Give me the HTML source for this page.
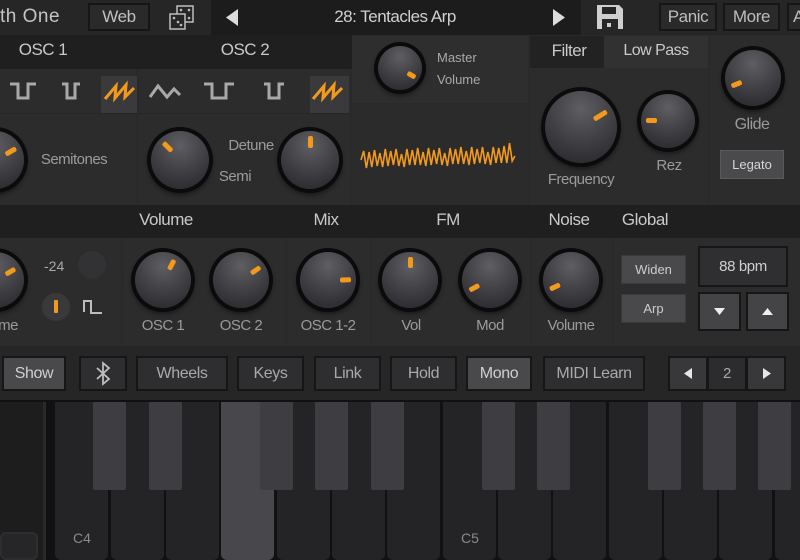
<!DOCTYPE html>
<html style="width:800px;height:560px;overflow:hidden"><head><meta charset="utf-8"><style>
*{margin:0;padding:0;box-sizing:border-box}
body{width:800px;height:560px;overflow:hidden;background:#2a2a2b;font-family:"Liberation Sans",sans-serif;position:relative}
.a{position:absolute}
.p{position:absolute;background:#2c2c2d}
.h{position:absolute;background:#1f1f20}
.t{position:absolute;color:#c9c9c9;font-size:17px;transform:translateX(-50%);white-space:nowrap;letter-spacing:-0.5px}
.l{position:absolute;color:#9b9b9b;font-size:15px;transform:translateX(-50%);white-space:nowrap;letter-spacing:-0.5px}
.k{position:absolute;border-radius:50%;background:radial-gradient(circle at 50% 25%,#5e5e63,#46464a 40%,#2f2f33 80%);box-shadow:0 0 0 4px #0b0b0b,0 3px 5px 3px rgba(0,0,0,.45)}
.k b{position:absolute;inset:0}
.k b:after{content:"";position:absolute;left:calc(50% - 2.5px);top:9%;width:5px;height:20%;background:#f39a1c;border-radius:2px}
.btn{position:absolute;background:#2e2e30;border:2px solid #161617;color:#a9a9a9;font-size:16px;text-align:center;letter-spacing:-0.4px}
.btn.on{background:#49494c;color:#cfcfcf}
.wk{position:absolute;top:402px;height:158px;background:#242426;border-radius:0 0 6px 6px;width:53px}
.bk{position:absolute;top:402px;height:88px;width:33px;background:#3e3e42;border-radius:0 0 2px 2px}
</style></head><body>
<div class="a" style="left:0;top:0;width:800px;height:35px;background:#262627"></div>
<div class="a" style="left:0;top:6px;color:#c4c4c4;font-size:19px;letter-spacing:0.5px">th One</div>
<div class="btn" style="left:88px;top:3px;width:62px;height:28px;line-height:24px;font-size:17px;background:#2a2a2b;color:#c0c0c0">Web</div>
<svg class="a" style="left:166px;top:3px" width="32" height="30" viewBox="0 0 32 30"><g fill="none" stroke="#bdbdbd" stroke-width="1.5"><rect x="11" y="3" width="16" height="16"/><rect x="4" y="11" width="15" height="15" fill="#262627"/></g><g fill="#bdbdbd"><circle cx="15" cy="7" r="1.3"/><circle cx="23" cy="7" r="1.3"/><circle cx="23" cy="15" r="1.3"/><circle cx="8" cy="15" r="1.3"/><circle cx="12" cy="19" r="1.3"/><circle cx="15" cy="22" r="1.3"/></g></svg>
<div class="a" style="left:211px;top:0;width:370px;height:35px;background:#1c1c1d"></div>
<svg class="a" style="left:224px;top:8px" width="16" height="19"><path d="M14 1 L2 9.5 L14 18Z" fill="#dcdcdc"/></svg>
<div class="t" style="left:395px;top:7px;font-size:17px;color:#d0d0d0">28: Tentacles Arp</div>
<svg class="a" style="left:551px;top:8px" width="16" height="19"><path d="M2 1 L14 9.5 L2 18Z" fill="#dcdcdc"/></svg>
<svg class="a" style="left:596px;top:4px" width="28" height="26" viewBox="0 0 28 26"><path d="M1 1 H23 L27 5 V25 H1Z" fill="#cfcfcf"/><rect x="6" y="3" width="14" height="7" fill="#262627"/><rect x="6" y="15" width="16" height="10" fill="#262627"/><rect x="11" y="19" width="4" height="4" fill="#cfcfcf"/></svg>
<div class="btn" style="left:659px;top:3px;width:58px;height:28px;line-height:24px;font-size:17px;background:#2a2a2b;color:#bdbdbd">Panic</div>
<div class="btn" style="left:723px;top:3px;width:57px;height:28px;line-height:24px;font-size:17px;background:#2a2a2b;color:#bdbdbd">More</div>
<div class="btn" style="left:787px;top:3px;width:30px;height:28px;line-height:24px;font-size:17px;background:#2a2a2b;color:#bdbdbd;text-align:left;padding-left:4px">A</div>

<div class="h" style="left:0;top:35px;width:352px;height:34px"></div>
<div class="t" style="left:43px;top:40px">OSC 1</div>
<div class="t" style="left:245px;top:40px">OSC 2</div>
<div class="p" style="left:0;top:69px;width:136px;height:136px"></div>
<div class="p" style="left:139px;top:69px;width:211px;height:136px"></div>
<div class="a" style="left:0;top:113px;width:350px;height:1px;background:#262627"></div>
<div class="a" style="left:101px;top:76px;width:36px;height:37px;background:#3a3a3c"></div>
<div class="a" style="left:310px;top:76px;width:39px;height:37px;background:#3a3a3c"></div>
<svg class="a" style="left:0;top:69px" width="350" height="44" viewBox="0 69 350 44"><g fill="none" stroke="#a9a9a9" stroke-width="3">
<path d="M10 84 H18 V98 H28 V84 H36"/>
<path d="M62 84 H67 V98 H75 V84 H80"/>
<path d="M150 97 L158 86 L167 97 L174 89 L180 95"/>
<path d="M204 84 H212 V98 H226 V84 H234"/>
<path d="M264 84 H269 V98 H279 V84 H284"/>
</g><g fill="none" stroke="#f39a1c" stroke-width="3">
<path d="M105 99 L116 86 L115 98 L126 85 L125 97 L134 88"/>
<path d="M313 99 L324 86 L323 98 L334 85 L333 97 L342 88"/>
</g></svg>
<div class="k" style="left:-34px;top:131px;width:58px;height:58px"><b style="transform:rotate(60deg)"></b></div>
<div class="l" style="left:74px;top:151px">Semitones</div>
<div class="k" style="left:151px;top:131px;width:58px;height:58px"><b style="transform:rotate(-45deg)"></b></div>
<div class="l" style="left:251px;top:137px">Detune</div>
<div class="l" style="left:235px;top:168px">Semi</div>
<div class="k" style="left:281px;top:131px;width:58px;height:58px"><b></b></div>

<div class="p" style="left:352px;top:36px;width:176px;height:67px;background:#2e2e2f"></div>
<div class="p" style="left:352px;top:104px;width:176px;height:101px;background:#2b2b2c"></div>
<div class="k" style="left:378px;top:46px;width:44px;height:44px"><b style="transform:rotate(120deg)"></b></div>
<div class="a" style="left:437px;top:47px;color:#a9a9a9;font-size:13px;line-height:22px">Master<br>Volume</div>
<svg class="a" style="left:352px;top:104px" width="176" height="100"><path fill="none" stroke="#f39a1c" stroke-width="1.6" d="M9 56 l2.7 -9 l2.7 17 l2.7 -16 l2.7 15 l2.7 -17 l2.7 16 l2.7 -13 l2.7 14 l2.7 -18 l2.7 17 l2.7 -15 l2.7 14 l2.7 -16 l2.7 17 l2.7 -12 l2.7 13 l2.7 -18 l2.7 16 l2.7 -15 l2.7 15 l2.7 -17 l2.7 17 l2.7 -13 l2.7 14 l2.7 -18 l2.7 17 l2.7 -15 l2.7 14 l2.7 -16 l2.7 17 l2.7 -12 l2.7 13 l2.7 -18 l2.7 16 l2.7 -15 l2.7 15 l2.7 -17 l2.7 17 l2.7 -13 l2.7 14 l2.7 -18 l2.7 17 l2.7 -15 l2.7 14 l2.7 -16 l2.7 17 l2.7 -12 l2.7 13 l2.7 -18 l2.7 16 l2.7 -15 l2.7 15 l2.7 -17 l2.7 17 l2.7 -20 l2.7 18 l2.7 -5"/></svg>

<div class="h" style="left:530px;top:36px;width:74px;height:32px;background:#222223"></div>
<div class="a" style="left:604px;top:36px;width:104px;height:32px;background:#313132"></div>
<div class="t" style="left:569px;top:41px">Filter</div>
<div class="t" style="left:656px;top:42px;font-size:16px">Low Pass</div>
<div class="p" style="left:530px;top:68px;width:178px;height:137px"></div>
<div class="k" style="left:545px;top:91px;width:72px;height:72px"><b style="transform:rotate(58deg)"></b></div>
<div class="l" style="left:581px;top:171px">Frequency</div>
<div class="k" style="left:641px;top:94px;width:54px;height:54px"><b style="transform:rotate(-90deg)"></b></div>
<div class="l" style="left:669px;top:157px">Rez</div>
<div class="p" style="left:710px;top:36px;width:90px;height:169px"></div>
<div class="k" style="left:725px;top:50px;width:56px;height:56px"><b style="transform:rotate(-112deg)"></b></div>
<div class="l" style="left:752px;top:116px;font-size:16px">Glide</div>
<div class="a" style="left:720px;top:150px;width:64px;height:29px;background:#4a4a4d;border:1px solid #5a5a5d;color:#d6d6d6;font-size:13px;text-align:center;line-height:27px">Legato</div>

<div class="h" style="left:0;top:205px;width:800px;height:33px"></div>
<div class="t" style="left:166px;top:210px">Volume</div>
<div class="t" style="left:326px;top:210px">Mix</div>
<div class="t" style="left:448px;top:210px">FM</div>
<div class="t" style="left:569px;top:210px">Noise</div>
<div class="t" style="left:645px;top:210px">Global</div>
<div class="p" style="left:0;top:238px;width:121px;height:108px"></div>
<div class="p" style="left:123px;top:238px;width:162px;height:108px"></div>
<div class="p" style="left:287px;top:238px;width:83px;height:108px"></div>
<div class="p" style="left:372px;top:238px;width:158px;height:108px"></div>
<div class="p" style="left:532px;top:238px;width:80px;height:108px"></div>
<div class="p" style="left:614px;top:238px;width:186px;height:108px"></div>
<div class="k" style="left:-34px;top:252px;width:58px;height:56px"><b style="transform:rotate(60deg)"></b></div>
<div class="l" style="left:8px;top:317px">me</div>
<div class="a" style="left:44px;top:258px;color:#a9a9a9;font-size:14px">-24</div>
<div class="a" style="left:78px;top:251px;width:28px;height:28px;border-radius:50%;background:#323234"></div>
<div class="a" style="left:42px;top:293px;width:28px;height:28px;border-radius:50%;background:#39393b"></div>
<div class="a" style="left:54px;top:300px;width:4px;height:13px;background:#f39a1c;border-radius:1px"></div>
<svg class="a" style="left:82px;top:298px" width="22" height="18"><path d="M2 14 V3 H9 V15 H20" fill="none" stroke="#bdbdbd" stroke-width="2"/></svg>
<div class="k" style="left:135px;top:252px;width:56px;height:56px"><b style="transform:rotate(28deg)"></b></div>
<div class="l" style="left:163px;top:317px">OSC 1</div>
<div class="k" style="left:213px;top:252px;width:56px;height:56px"><b style="transform:rotate(55deg)"></b></div>
<div class="l" style="left:241px;top:317px">OSC 2</div>
<div class="k" style="left:300px;top:252px;width:56px;height:56px"><b style="transform:rotate(88deg)"></b></div>
<div class="l" style="left:328px;top:317px">OSC 1-2</div>
<div class="k" style="left:382px;top:252px;width:56px;height:56px"><b></b></div>
<div class="l" style="left:411px;top:317px">Vol</div>
<div class="k" style="left:462px;top:252px;width:56px;height:56px"><b style="transform:rotate(-118deg)"></b></div>
<div class="l" style="left:490px;top:317px">Mod</div>
<div class="k" style="left:543px;top:252px;width:56px;height:56px"><b style="transform:rotate(-115deg)"></b></div>
<div class="l" style="left:571px;top:317px">Volume</div>
<div class="a" style="left:621px;top:255px;width:65px;height:29px;background:#49494c;border:1px solid #3a3a3c;color:#cdcdcd;font-size:13px;text-align:center;line-height:27px">Widen</div>
<div class="a" style="left:621px;top:294px;width:65px;height:29px;background:#49494c;border:1px solid #3a3a3c;color:#cdcdcd;font-size:13px;text-align:center;line-height:27px">Arp</div>
<div class="btn" style="left:698px;top:246px;width:90px;height:41px;line-height:37px;font-size:15px;color:#cfcfcf;background:#2f2f31">88 bpm</div>
<div class="btn" style="left:698px;top:292px;width:43px;height:39px;background:#444447"><svg width="39" height="35"><path d="M14 14 H25 L19.5 21Z" fill="#eee"/></svg></div>
<div class="btn" style="left:746px;top:292px;width:43px;height:39px;background:#444447"><svg width="39" height="35"><path d="M14 21 H25 L19.5 14Z" fill="#eee"/></svg></div>

<div class="a" style="left:0;top:346px;width:800px;height:56px;background:#262627"></div>
<div class="btn on" style="left:2px;top:356px;width:64px;height:35px;line-height:31px">Show</div>
<div class="btn" style="left:79px;top:356px;width:48px;height:35px"><svg width="44" height="31"><path d="M16 10 L28 21 L22 26 V5 L28 10 L16 21" fill="none" stroke="#bdbdbd" stroke-width="1.8"/></svg></div>
<div class="btn" style="left:136px;top:356px;width:92px;height:35px;line-height:31px">Wheels</div>
<div class="btn" style="left:237px;top:356px;width:67px;height:35px;line-height:31px">Keys</div>
<div class="btn" style="left:314px;top:356px;width:67px;height:35px;line-height:31px">Link</div>
<div class="btn" style="left:390px;top:356px;width:67px;height:35px;line-height:31px">Hold</div>
<div class="btn on" style="left:466px;top:356px;width:66px;height:35px;line-height:31px">Mono</div>
<div class="btn" style="left:543px;top:356px;width:102px;height:35px;line-height:31px">MIDI Learn</div>
<div class="btn" style="left:668px;top:356px;width:40px;height:35px;background:#38383a"><svg width="36" height="31"><path d="M22 10 V21 L14 15.5Z" fill="#e6e6e6"/></svg></div>
<div class="btn" style="left:707px;top:356px;width:40px;height:35px;line-height:31px;background:#2c2c2e;font-size:15px">2</div>
<div class="btn" style="left:746px;top:356px;width:40px;height:35px;background:#38383a"><svg width="36" height="31"><path d="M15 10 V21 L23 15.5Z" fill="#e6e6e6"/></svg></div>

<div class="a" style="left:0;top:400px;width:800px;height:160px;background:#111112"></div>
<div class="a" style="left:0;top:402px;width:46px;height:158px;background:#1d1d1e;border-right:3px solid #2a2a2b"></div>
<div class="a" style="left:0;top:532px;width:38px;height:28px;border:2px solid #2e2e30;border-radius:6px;background:#262628"></div>
<div class="wk" style="left:55px"></div>
<div class="wk" style="left:111px"></div>
<div class="wk" style="left:166px"></div>
<div class="wk" style="left:221px;background:#48474c"></div>
<div class="wk" style="left:277px"></div>
<div class="wk" style="left:332px"></div>
<div class="wk" style="left:387px"></div>
<div class="wk" style="left:443px"></div>
<div class="wk" style="left:498px"></div>
<div class="wk" style="left:553px"></div>
<div class="wk" style="left:609px"></div>
<div class="wk" style="left:664px"></div>
<div class="wk" style="left:719px"></div>
<div class="wk" style="left:775px"></div>
<div class="bk" style="left:93px"></div>
<div class="bk" style="left:149px"></div>
<div class="bk" style="left:260px"></div>
<div class="bk" style="left:315px"></div>
<div class="bk" style="left:371px"></div>
<div class="bk" style="left:482px"></div>
<div class="bk" style="left:537px"></div>
<div class="bk" style="left:648px"></div>
<div class="bk" style="left:703px"></div>
<div class="bk" style="left:758px"></div>
<div class="a" style="left:73px;top:530px;color:#8a8a8a;font-size:14px">C4</div>
<div class="a" style="left:461px;top:530px;color:#8a8a8a;font-size:14px">C5</div>
</body></html>
